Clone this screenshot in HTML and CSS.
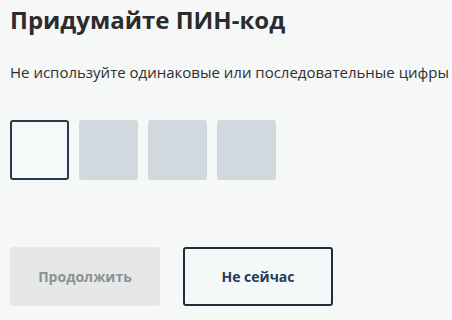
FILE: index.html
```html
<!DOCTYPE html>
<html lang="ru">
<head>
<meta charset="utf-8">
<link rel="stylesheet" href="styles.css">
</head>
<body>
<main class="screen">
  <h1 class="title">Придумайте ПИН-код</h1>
  <p class="hint">Не используйте одинаковые или последовательные цифры</p>
  <div class="pins">
    <div class="pin pin-active"></div>
    <div class="pin"></div>
    <div class="pin"></div>
    <div class="pin"></div>
  </div>
  <div class="actions">
    <button class="btn btn-disabled" type="button">Продолжить</button>
    <button class="btn btn-outline" type="button">Не сейчас</button>
  </div>
</main>
</body>
</html>
```
FILE: styles.css
```css
html, body {
  margin: 0;
  padding: 0;
  background: #f6f7f7;
}
.screen {
  width: 452px;
  height: 320px;
  box-sizing: border-box;
  padding: 5px 10px 0 10px;
  font-family: "Open Sans", "Noto Sans", sans-serif;
  display: flex;
  flex-direction: column;
}
.title {
  margin: 0;
  font-size: 24px;
  font-weight: 700;
  line-height: 30px;
  color: #2b2b2b;
}
.hint {
  margin: 27px 0 0 0;
  font-size: 15px;
  line-height: 20px;
  color: #2f2f2f;
  white-space: nowrap;
}
.pins {
  margin-top: 38px;
  display: flex;
  gap: 10px;
}
.pin {
  width: 59px;
  height: 60px;
  box-sizing: border-box;
  border-radius: 3px;
  background: #d1d9df;
}
.pin-active {
  background: #f5f9fa;
  border: 2px solid #2a3a4d;
}
.actions {
  margin-top: 67px;
  display: flex;
  gap: 23px;
}
.btn {
  width: 150px;
  height: 59px;
  box-sizing: border-box;
  border-radius: 3px;
  font-family: "Open Sans", "Noto Sans", sans-serif;
  font-size: 14px;
  font-weight: 700;
  padding: 0;
}
.btn-disabled {
  background: #e6e8e8;
  border: none;
  color: #8b9094;
}
.btn-outline {
  background: #f5f8f9;
  border: 2px solid #1f2d3d;
  color: #243b5a;
}
```
